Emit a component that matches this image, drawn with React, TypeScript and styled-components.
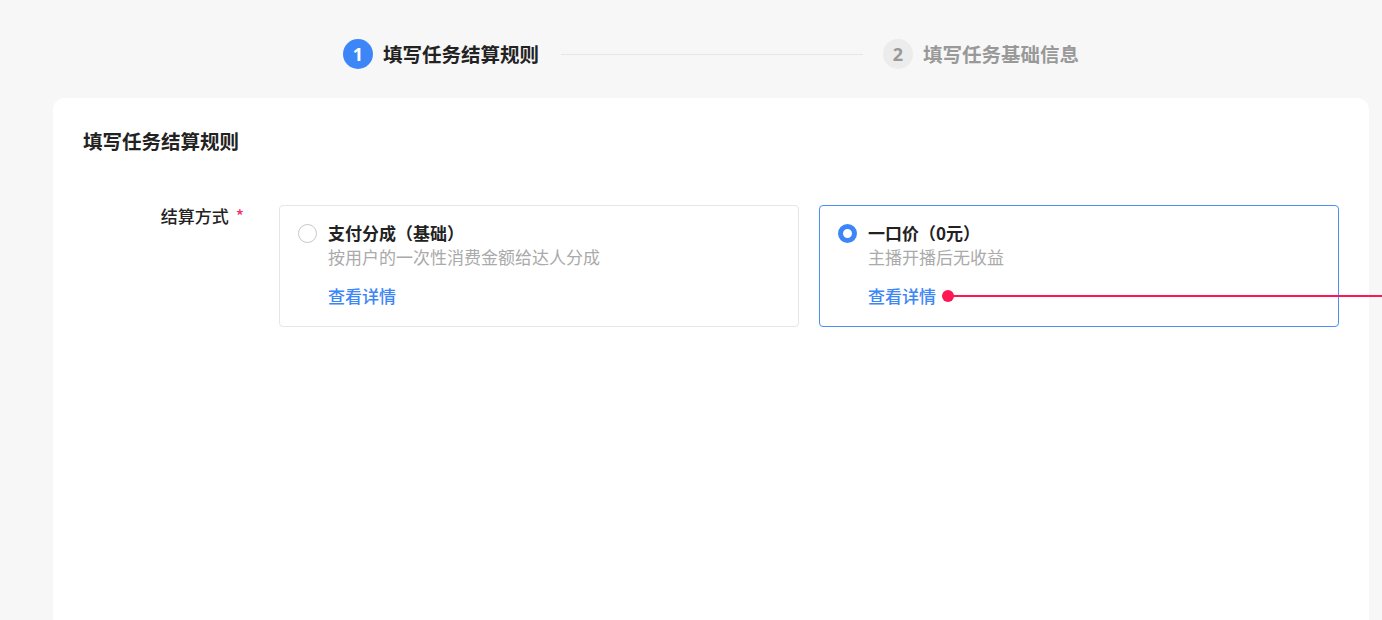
import React from "react";
import styled, { createGlobalStyle } from "styled-components";

const GlobalStyle = createGlobalStyle`
  html, body { margin: 0; padding: 0; background: #f7f7f7; overflow: hidden; }
  body { font-family: "Noto Sans CJK SC", "Noto Sans", sans-serif; color: #222; }
  * { box-sizing: border-box; }
`;

const Page = styled.div`
  padding: 0 13px 0 53px;
  height: 620px;
  overflow: hidden;
`;

const Steps = styled.div`
  display: flex;
  align-items: center;
  justify-content: center;
  padding-top: 39px;
  height: 69px;
`;

const Step = styled.div`
  display: flex;
  align-items: center;
  gap: 10px;
`;

const StepNum = styled.span<{ $active?: boolean }>`
  width: 30px;
  height: 30px;
  border-radius: 50%;
  display: flex;
  align-items: center;
  justify-content: center;
  font-family: "Noto Sans", "Liberation Sans", sans-serif;
  font-size: 18px;
  font-weight: 700;
  background: ${(p) => (p.$active ? "#3d86f7" : "#ececec")};
  color: ${(p) => (p.$active ? "#fff" : "#999")};
`;

const StepText = styled.span<{ $active?: boolean }>`
  font-size: 19.5px;
  font-weight: 700;
  line-height: 30px;
  color: ${(p) => (p.$active ? "#222" : "#999")};
`;

const StepLine = styled.div`
  width: 302px;
  height: 1px;
  background: #e6e6e6;
  margin: 0 20px 0 22px;
`;

const Card = styled.div`
  margin-top: 29px;
  background: #fff;
  border-radius: 12px 12px 0 0;
  padding: 29px 30px 0;
  min-height: 560px;
`;

const CardTitle = styled.h2`
  margin: 0;
  font-size: 19.5px;
  font-weight: 700;
  line-height: 28px;
  color: #222;
`;

const FormRow = styled.div`
  display: flex;
  margin-top: 50px;
`;

const Label = styled.div`
  width: 196px;
  padding-right: 35px;
  text-align: right;
  font-size: 17px;
  line-height: 22px;
  font-weight: 500;
  color: #222;
  white-space: nowrap;
`;

const Required = styled.span`
  color: #f5346a;
  margin-left: 7px;
`;

const Options = styled.div`
  flex: 1;
  display: flex;
  gap: 20px;
`;

const Option = styled.div<{ $selected?: boolean }>`
  flex: 1;
  height: 122px;
  border: 1px solid ${(p) => (p.$selected ? "#4a8ff7" : "#e6e6e6")};
  border-radius: 4px;
  padding: 15px 18px 0;
  display: flex;
  gap: 11px;
`;

const Radio = styled.span<{ $checked?: boolean }>`
  flex: none;
  width: 19px;
  height: 19px;
  margin-top: 3px;
  border-radius: 50%;
  border: ${(p) => (p.$checked ? "5.5px solid #3d86f7" : "1px solid #c8c8c8")};
  background: #fff;
`;

const OptionBody = styled.div`
  display: flex;
  flex-direction: column;
`;

const OptionTitle = styled.div`
  font-size: 17px;
  line-height: 24px;
  font-weight: 600;
  color: #222;
`;

const OptionDesc = styled.div`
  font-size: 17px;
  line-height: 24px;
  color: #aaa;
`;

const Link = styled.a`
  position: relative;
  align-self: flex-start;
  margin-top: 15px;
  font-size: 17px;
  line-height: 24px;
  font-weight: 500;
  color: #3d86f7;
  text-decoration: none;
  cursor: pointer;
`;

const Marker = styled.span`
  position: absolute;
  left: calc(100% + 6px);
  top: 50%;
  width: 12px;
  height: 12px;
  margin-top: -6px;
  border-radius: 50%;
  background: #ff1654;
  &::after {
    content: "";
    position: absolute;
    left: 6px;
    top: 5px;
    width: 1000px;
    height: 2px;
    background: #ff1654;
  }
`;

export default function App() {
  return (
    <>
      <GlobalStyle />
      <Page>
        <Steps>
          <Step>
            <StepNum $active>1</StepNum>
            <StepText $active>填写任务结算规则</StepText>
          </Step>
          <StepLine />
          <Step>
            <StepNum>2</StepNum>
            <StepText>填写任务基础信息</StepText>
          </Step>
        </Steps>
        <Card>
          <CardTitle>填写任务结算规则</CardTitle>
          <FormRow>
            <Label>
              结算方式<Required>*</Required>
            </Label>
            <Options>
              <Option>
                <Radio />
                <OptionBody>
                  <OptionTitle>支付分成（基础）</OptionTitle>
                  <OptionDesc>按用户的一次性消费金额给达人分成</OptionDesc>
                  <Link>查看详情</Link>
                </OptionBody>
              </Option>
              <Option $selected>
                <Radio $checked />
                <OptionBody>
                  <OptionTitle>一口价（0元）</OptionTitle>
                  <OptionDesc>主播开播后无收益</OptionDesc>
                  <Link>
                    查看详情
                    <Marker />
                  </Link>
                </OptionBody>
              </Option>
            </Options>
          </FormRow>
        </Card>
      </Page>
    </>
  );
}
